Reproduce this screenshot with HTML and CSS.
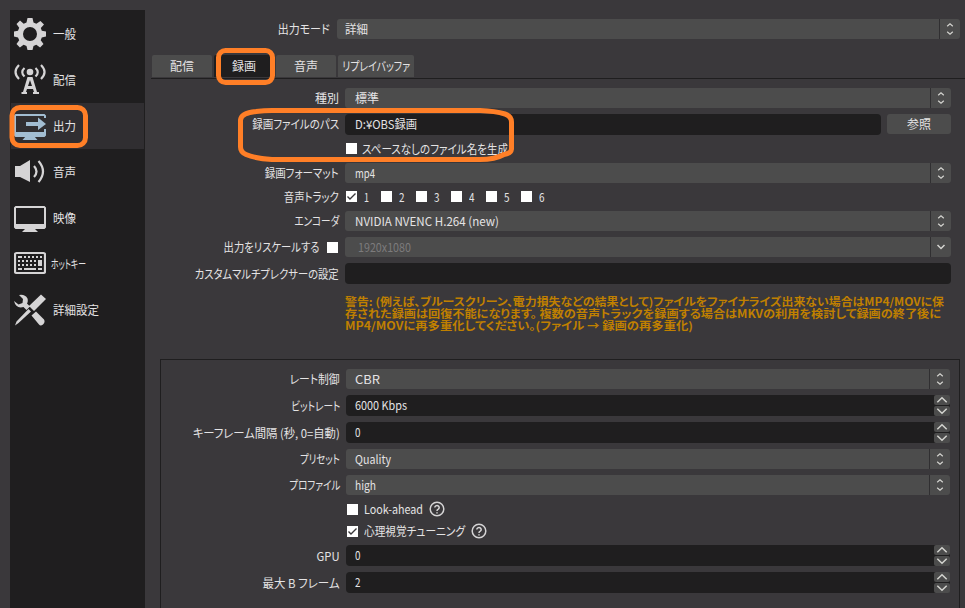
FILE: index.html
```html
<!DOCTYPE html>
<html lang="ja">
<head>
<meta charset="utf-8">
<title>設定</title>
<link rel="stylesheet" href="styles.css">
</head>
<body>
<svg class="defs" width="0" height="0">
  <symbol id="updown" viewBox="0 0 8 14"><path d="M1.2 4.2 4 1.7 6.8 4.2M1.2 9.8 4 12.3 6.8 9.8"/></symbol>
  <symbol id="down" viewBox="0 0 10 6"><path d="M1.5 1 5 4.5 8.5 1"/></symbol>
  <symbol id="up" viewBox="0 0 12 8"><path d="M1.3 6.2 6 1.800 10.700 6.2"/></symbol>
  <symbol id="dn" viewBox="0 0 12 8"><path d="M1.300 1.800 6 6.200 10.700 1.800"/></symbol>
  <symbol id="help" viewBox="0 0 16 16"><circle cx="8" cy="8" r="6.800"/><path d="M5.800 6.500a2.200 2 0 1 1 3.500 1.600Q8 8.800 8 9.900M8 11.300v1.300"/></symbol>
</svg>
<aside class="sidebar">
  <div class="item">
    <svg viewBox="0 0 32 32"><path fill-rule="evenodd" d="M13.500 0h5l1 4.500 2.800 1.200L26.500 3 30 6.500 26.800 10l1 2.800 4.200.7v5l-4.200.9-1.100 2.900 2.800 3.800-3.400 3.400-3.800-2.700-2.800 1.200-1 4h-5l-1-4-2.900-1.200L5.900 29.500l-3.400-3.400 2.700-3.800-1.200-2.900-4-.9v-5l4-.8 1.200-2.900L2.500 6 6 2.500l3.700 3.200 2.800-1.200zM16 9a7 7 0 1 0 0 14 7 7 0 0 0 0-14z"/></svg>
    <span class="name" data-w="23">一般</span></div>
  <div class="item">
    <svg viewBox="0 0 32 32"><circle cx="16" cy="8" r="3.300"/><path class="line" d="M10.500 4q-4.500 4 0 8.500M21.500 4q4.500 4 0 8.500M5 1q-7 7 0 14M27 1q7 7 0 14"/><path fill-rule="evenodd" d="M13.500 13h5L23 28h2v2h-6v-2h1l-1-3h-6l-1 3h1v2H7.500v-2H9zM16 16l-2 6h4z"/></svg>
    <span class="name" data-w="23">配信</span></div>
  <div class="item selected">
    <svg viewBox="0 0 32 32"><path fill-rule="evenodd" d="M1.500 4h29L32 5.500V8h-2V6H2v16h28v-3h2v6.500L30.500 27H1.500L0 25.500v-20z"/><path d="M12 26h8l3.500 4H8.500zM12 12h12V7.500l8 6.500-8 6V16H12z"/></svg>
    <span class="name" data-w="23">出力</span></div>
  <div class="item">
    <svg viewBox="0 0 32 32"><path d="M1 10h5l10-6v22L6 21H1z"/><path class="line" d="M20 10q5 5.500 0 11M24.500 5q9 10.500 0 21"/></svg>
    <span class="name" data-w="23">音声</span></div>
  <div class="item">
    <svg viewBox="0 0 32 32"><path fill-rule="evenodd" d="M1.500 4h29L32 5.500v20L30.500 27H1.500L0 25.500v-20zM2 6v16h28V6z"/><path d="M12 26h8l4 4H8z"/></svg>
    <span class="name" data-w="23">映像</span></div>
  <div class="item">
    <svg viewBox="0 0 32 32"><rect class="line" x="1" y="5" width="30" height="20" rx="1.500"/><path class="keys" d="M4 9h4m2 0h2m2 0h2m2 0h2m2 0h2m2 0h2M4 13h2m2 0h2m2 0h2m2 0h2m2 0h2M4 17h2m2 0h2m2 0h2m2 0h2m2 0h2M4 21h4m2 0h12m2 0h4"/><path d="M24 12h4V18h-4z"/></svg>
    <span class="name hot" data-w="35">ホットキー</span></div>
  <div class="item">
    <svg viewBox="0 0 32 32"><path d="M27 0.500 32 5 20 17l-5-5zM14.500 15l2.500 2.500L4.500 29 1 31.500l1.500-4zM17.500 21.500l4.500-4L30 25.500q1.500 3-1 5t-4 0zM5 1q6-1 8.500 3.500.8 3-.5 5l3 3-3.500 3.500-3-3Q2 15 0 7l4.500 3.500 4-1.500.5-4z"/></svg>
    <span class="name" data-w="46">詳細設定</span></div>
</aside>
<main>
  <div class="mode"><label><span data-w="52">出力モード</span></label>
    <div class="combo"><span data-w="23">詳細</span><i><svg><use href="#updown"/></svg></i></div></div>
  <nav class="tabs">
    <div><span data-w="24">配信</span></div><div class="active"><span data-w="24">録画</span></div><div><span data-w="24">音声</span></div><div class="wide"><span data-w="68">リプレイバッファ</span></div>
  </nav>
  <section class="form recording">
    <label><span data-w="24">種別</span></label>
    <div class="combo"><span data-w="24">標準</span><i><svg><use href="#updown"/></svg></i></div>
    <label><span data-w="87">録画ファイルのパス</span></label>
    <div class="path"><div class="input"><span data-w="62">D:¥OBS録画</span></div><button><span data-w="24">参照</span></button></div>
    <label></label>
    <div class="checks"><b class="box"></b><span data-w="146">スペースなしのファイル名を生成</span></div>
    <label><span data-w="74">録画フォーマット</span></label>
    <div class="combo"><span data-w="20">mp4</span><i><svg><use href="#updown"/></svg></i></div>
    <label><span data-w="55">音声トラック</span></label>
    <div class="checks tracks">
      <div><b class="box"><svg viewBox="0 0 11 11"><path d="M1.500 5.500 4 8 9.500 2.500"/></svg></b><span data-w="5">1</span></div><div><b class="box"></b><span data-w="5.500">2</span></div><div><b class="box"></b><span data-w="5.500">3</span></div><div><b class="box"></b><span data-w="5.500">4</span></div><div><b class="box"></b><span data-w="5.500">5</span></div><div><b class="box"></b><span data-w="5.500">6</span></div>
    </div>
    <label><span data-w="45">エンコーダ</span></label>
    <div class="combo"><span data-w="144">NVIDIA NVENC H.264 (new)</span><i><svg><use href="#updown"/></svg></i></div>
    <label><span data-w="96">出力をリスケールする</span><b class="box"></b></label>
    <div class="combo disabled"><span data-w="53">1920x1080</span><i><svg class="single"><use href="#down"/></svg></i></div>
    <label><span data-w="144">カスタムマルチプレクサーの設定</span></label>
    <div class="input"></div>
  </section>
  <div class="warning">
    <p><span data-w="599">警告: (例えば、ブルースクリーン、電力損失などの結果として)ファイルをファイナライズ出来ない場合はMP4/MOVに保</span></p>
    <p><span data-w="596">存された録画は回復不能になります。 複数の音声トラックを録画する場合はMKVの利用を検討して録画の終了後に</span></p>
    <p><span data-w="348">MP4/MOVに再多重化してください。(ファイル → 録画の再多重化)</span></p>
  </div>
  <section class="form encoder">
    <label><span data-w="50">レート制御</span></label>
    <div class="combo"><span data-w="25">CBR</span><i><svg><use href="#updown"/></svg></i></div>
    <label><span data-w="49">ビットレート</span></label>
    <div class="input"><span data-w="52">6000 Kbps</span><em><i><svg><use href="#up"/></svg></i><i><svg><use href="#dn"/></svg></i></em></div>
    <label><span data-w="147">キーフレーム間隔 (秒, 0=自動)</span></label>
    <div class="input"><span data-w="5.500">0</span><em><i><svg><use href="#up"/></svg></i><i><svg><use href="#dn"/></svg></i></em></div>
    <label><span data-w="40">プリセット</span></label>
    <div class="combo"><span data-w="36">Quality</span><i><svg><use href="#updown"/></svg></i></div>
    <label><span data-w="51">プロファイル</span></label>
    <div class="combo"><span data-w="21">high</span><i><svg><use href="#updown"/></svg></i></div>
    <label></label>
    <div class="checks"><b class="box"></b><span class="look" data-w="59">Look-ahead</span><svg class="help"><use href="#help"/></svg></div>
    <label></label>
    <div class="checks"><b class="box"><svg viewBox="0 0 11 11"><path d="M1.500 5.500 4 8 9.500 2.500"/></svg></b><span class="psy" data-w="101">心理視覚チューニング</span><svg class="help"><use href="#help"/></svg></div>
    <label><span data-w="23">GPU</span></label>
    <div class="input"><span data-w="5.500">0</span><em><i><svg><use href="#up"/></svg></i><i><svg><use href="#dn"/></svg></i></em></div>
    <label><span data-w="77">最大 B フレーム</span></label>
    <div class="input"><span data-w="5.500">2</span><em><i><svg><use href="#up"/></svg></i><i><svg><use href="#dn"/></svg></i></em></div>
  </section>
</main>
<svg class="marks" viewBox="0 0 965 608">
  <rect x="12" y="107.500" width="73.500" height="38" rx="8"/>
  <rect x="218.500" y="50.500" width="54" height="32" rx="7"/>
  <path d="M272 110.500H480Q495 111 505 114 511.500 116 511.500 122V149Q511 153.500 504 154.500 495 159.500 480 159.500H272Q255 158.500 246 154.500 240.500 152 240.500 147V120Q241 113 256 111.500 264 110.500 272 110.500Z"/>
</svg>
<script src="fit.js"></script>
</body>
</html>
```
FILE: styles.css
```css
* { box-sizing: border-box; }
body { margin: 0; width: 965px; height: 608px; overflow: hidden; background: #3a383b; color: #e4e3e4; font: 12px/16px "Noto Sans CJK JP", sans-serif; font-feature-settings: "palt"; display: flex; }
svg { flex: none; display: block; }
span { white-space: nowrap; display: inline-block; transform-origin: left center; }
.defs { position: absolute; }
.sidebar { width: 135px; height: 598px; margin: 10px 0 0 10px; padding: 1px; background: #1f1e1f; flex: none; }
.item { height: 46px; display: flex; align-items: center; padding-left: 3px; }
.item svg { width: 32px; height: 32px; margin-right: 7px; fill: #d5d4d5; }
.item .hot { margin-left: -2px; }
.item .line { fill: none; stroke: #d5d4d5; stroke-width: 2.2; }
.keys { fill: none; stroke: #d5d4d5; stroke-width: 2; }
.selected { background: #302e31; }
.item.selected svg { fill: #a2bdd2; }
main { flex: 1; min-width: 0; padding: 19px 0 0 6px; }
label { display: flex; justify-content: flex-end; align-items: center; padding-right: 6px; }
label span { transform-origin: right center; }
.mode { display: grid; grid-template-columns: 186px 623px; height: 36px; grid-template-rows: 20px; }
.mode label { padding-right: 7px; }
.mode .combo { padding-left: 8px; }
.combo, .input { display: flex; align-items: center; padding-left: 10px; border-radius: 3px; min-width: 0; }
.combo { background: #4c4c4c; height: 20px; }
.combo > span, .input > span { flex: 1; width: 0; }
.input > span { padding-bottom: 2px; }
.encoder .combo, .encoder .input { padding-left: 9px; }
.combo > i { width: 21px; height: 20px; border-left: 1px solid #302f31; display: flex; align-items: center; justify-content: center; }
.combo > i svg { width: 8px; height: 14px; }
.combo > i .single { width: 10px; height: 6px; }
i svg { fill: none; stroke: #d4d4d0; stroke-width: 1.2; }
i .single { stroke-width: 1.5; }
.combo.disabled { color: #7c7b7c; padding-left: 13px; }
.input { background: #1f1e1f; height: 21px; border-radius: 4px; }
.input em { width: 16px; height: 21px; display: flex; flex-direction: column; gap: 1px; }
.input em i { height: 10px; background: #4c4c4c; border-radius: 2px; display: flex; align-items: center; justify-content: center; }
.input em svg { width: 12px; height: 8px; stroke-width: 1.5; }
.tabs { display: flex; gap: 2px; height: 24px; padding-left: 1px; border-bottom: 1px solid #1f1e1f; }
.tabs div { width: 60px; height: 22px; background: #4c4c4c; border-radius: 2px 2px 0 0; display: flex; justify-content: center; align-items: center; }
.tabs span, button span { transform-origin: center; }
.tabs .active { background: #1f1e1f; }
.tabs .wide { width: 76px; }
.form { display: grid; gap: 6px 0; }
.recording { grid-template-columns: 194px 606px; grid-template-rows: 20px 20px 17px 20px 16px 20px 20px 21px; margin-top: 9px; }
.path { display: flex; gap: 6px; }
.path .input { width: 536px; }
button { width: 64px; height: 20px; background: #4c4c4c; border: 0; border-radius: 3px; padding: 0; color: inherit; font: inherit; font-feature-settings: inherit; display: flex; align-items: center; justify-content: center; }
.checks { display: flex; align-items: center; padding-left: 1px; }
.box { width: 11px; height: 11px; flex: none; background: #fff; }
.checks .box { margin-right: 5px; }
.encoder .checks .box { margin-right: 6px; }
.box svg { width: 11px; height: 11px; fill: none; stroke: #3a383b; stroke-width: 1.4; }
label .box { margin: 0 1px 0 7px; }
.tracks { height: 15px; }
.tracks > div { width: 35px; display: flex; align-items: center; }
.tracks .box { margin-right: 7px; }
.warning { color: #c08000; font-weight: 700; font-size: 11px; margin: 11px 0 0 194px; }
.warning p { margin: 0; height: 12px; line-height: 12px; }
.warning span { display: block; width: max-content; line-height: 12px; }
.encoder { margin: 28px 0 0 9px; width: 800px; height: 260px; border: 1px solid #1f1e1f; padding-top: 9px; align-content: start; grid-template-columns: 185px 604px; grid-template-rows: 20px 21px 21px 20px 20px 16px 16px 21px 21px; }
.look { width: 60px; }
.psy { width: 102px; }
.help { width: 16px; height: 16px; margin-left: 5px; fill: none; stroke: #d5d4d5; stroke-width: 1.5; }
.marks { position: absolute; left: 0; top: 0; width: 965px; height: 608px; fill: none; stroke: #ff7f27; stroke-width: 5; pointer-events: none; }
```
FILE: fit.js
```js
// Condense each caption horizontally to its UI font width.
document.querySelectorAll("[data-w]").forEach((el) => {
  const range = document.createRange();
  range.selectNodeContents(el);
  const natural = range.getBoundingClientRect().width;
  el.style.transform = `scaleX(${el.dataset.w / natural})`;
});
```
